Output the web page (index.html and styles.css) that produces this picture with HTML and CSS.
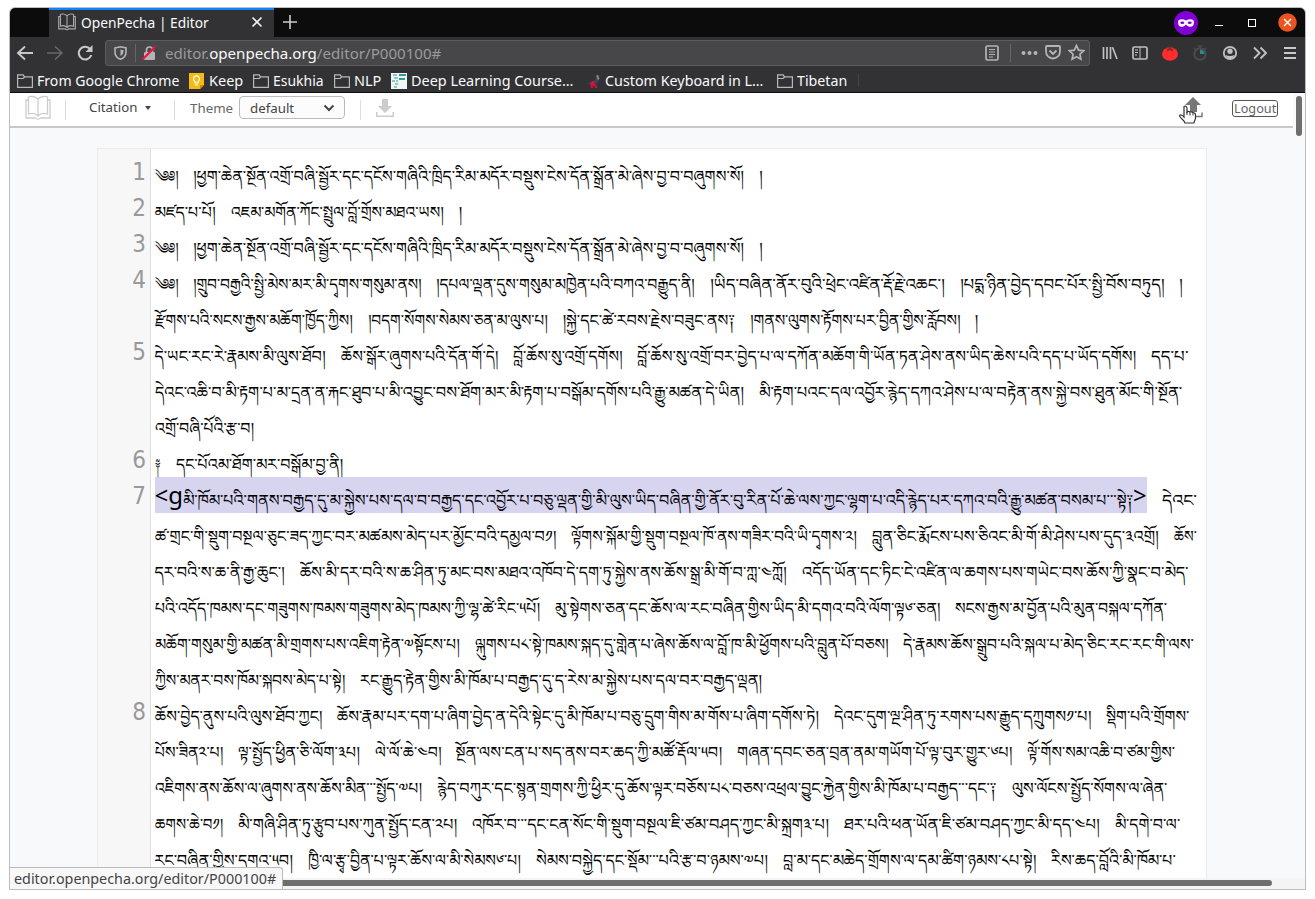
FILE: index.html
```html
<!DOCTYPE html>
<html lang="bo">
<head>
<meta charset="utf-8">
<title>OpenPecha | Editor</title>
<link rel="stylesheet" href="styles.css">
</head>
<body>
<svg class="defs" width="0" height="0"><defs>
<symbol id="folder" viewBox="0 0 16 14"><path d="M.6 13.400V.8h5.600l1.300 2h7.900v10.600zM.6 4.500h5.600l1.300-1.500" fill="none" stroke="#b8b8b8" stroke-width="1.200"/></symbol>
<symbol id="book" viewBox="0 0 26 26"><path d="M13 4C10 1 5 1 3.500 2v17c3-1 7-1 9.500 2c2.500-3 6.500-3 9.500-2V2C21 1 16 1 13 4zv17M3.500 5H1v18h9.500c1 1.500 4 1.500 5 0H25V5h-2.500" fill="none" stroke="currentColor" stroke-width="var(--sw)"/></symbol>
</defs></svg>
<div class="window">
  <header class="tabs">
    <div class="tab">
      <svg class="fav" width="18" height="18"><use href="#book"/></svg>
      <span class="fit" style="width:128px">OpenPecha | Editor</span>
      <svg class="x" width="12" height="12" viewBox="0 0 12 12"><path d="M1.500 1.500l9 9m0-9l-9 9" stroke="#eee" stroke-width="1.700"/></svg>
    </div>
    <svg class="plus" width="16" height="16" viewBox="0 0 16 16"><path d="M8 1v14M1 8h14" stroke="#ccc" stroke-width="1.600"/></svg>
    <svg class="mask" width="24" height="24" viewBox="0 0 24 24"><circle cx="12" cy="12" r="12" fill="#8000d7"/><path d="M4 11c0-3 4-3.500 8-1.500c4-2 8-1.500 8 1.500c0 6-5 6-8 2.500C9 17 4 17 4 11z" fill="#fff"/><ellipse cx="8.300" cy="11.800" rx="2" ry="1.200" fill="#8000d7"/><ellipse cx="15.700" cy="11.800" rx="2" ry="1.200" fill="#8000d7"/></svg>
    <svg class="min" width="8" height="10"><path d="M0 7.500h8" stroke="#fff" stroke-width="1.200"/></svg>
    <svg class="max" width="8" height="8"><rect x=".5" y=".5" width="7" height="7" fill="none" stroke="#fff"/></svg>
    <svg class="close" width="19" height="19" viewBox="0 0 19 19"><circle cx="9.500" cy="9.500" r="9.300" fill="#e95420"/><path d="M6 6l7 7m0-7l-7 7" stroke="#fff" stroke-width="1.400"/></svg>
  </header>
  <nav class="navbar">
    <svg width="18" height="18" viewBox="0 0 18 18"><path d="M17 9H2m7-6.500L2 9l7 6.500" fill="none" stroke="#c8c8ca" stroke-width="1.900"/></svg>
    <svg class="fwd" width="18" height="18" viewBox="0 0 18 18"><path d="M1 9h15M9 2.500L16 9l-7 6.500" fill="none" stroke="#68686b" stroke-width="1.600"/></svg>
    <svg class="reload" width="18" height="18" viewBox="0 0 18 18"><path d="M14.500 5.500A6.400 6.400 0 1 0 15.300 11" fill="none" stroke="#c8c8ca" stroke-width="2.100"/><path d="M16.500 1v7H9.500z" fill="#c8c8ca"/></svg>
    <div class="url">
      <svg width="13" height="14" viewBox="0 0 13 14"><path d="M1 2l5.500-1.200L12 2v4c0 3.500-2 6-5.500 7.200C3 12 1 9.500 1 6z" fill="none" stroke="#b4b4b6" stroke-width="1.600"/><path d="M6.500 3.500v6.500c2-1.200 3-2.500 3-5.800z" fill="#b4b4b6"/></svg>
      <i class="sep"></i>
      <svg width="16" height="16" viewBox="0 0 16 16"><rect x="3" y="7" width="11" height="8" rx="1" fill="#b4b4b6"/><path d="M5.500 7V5a3 3 0 0 1 6 0v2" fill="none" stroke="#b4b4b6" stroke-width="1.700"/><path d="M1.500 14.500L14.500 1.500" stroke="#f0123c" stroke-width="2.200"/></svg>
      <span class="addr fit" style="width:276px">editor.<b>openpecha.org</b>/editor/P000100#</span>
      <svg class="reader" width="14" height="16" viewBox="0 0 14 16"><rect x="1" y="1" width="12" height="14" rx="1.500" fill="none" stroke="#b4b4b6" stroke-width="1.700"/><path d="M4 4.500h6M4 7h6M4 9.500h6M4 12h4" stroke="#b4b4b6"/></svg>
      <i class="sep rsep"></i>
      <svg class="dots" width="17" height="6"><g fill="#b4b4b6"><circle cx="2.500" cy="3" r="2"/><circle cx="8.500" cy="3" r="2"/><circle cx="14.500" cy="3" r="2"/></g></svg>
      <svg class="pocket" width="16" height="15" viewBox="0 0 16 15"><path d="M1 2q0-1 1-1h12q1 0 1 1v4.500a7 7 0 0 1-14 0z" fill="none" stroke="#b4b4b6" stroke-width="1.800"/><path d="M4.500 5.500L8 9l3.500-3.500" fill="none" stroke="#b4b4b6" stroke-width="1.900"/></svg>
      <svg class="star" width="17" height="17" viewBox="0 0 17 17"><path d="M8.500 1.500l2.100 4.700 5 .6-3.700 3.400 1 5-4.400-2.500-4.400 2.500 1-5L1.400 6.800l5-.6z" fill="none" stroke="#b4b4b6" stroke-width="1.700"/></svg>
    </div>
    <div class="ext">
      <svg width="16" height="16" viewBox="0 0 16 16"><path d="M1.500 2v12M5 2v12M8.500 2v12M10.500 2.300L15 14" stroke="#c0c0c2" stroke-width="1.700"/></svg>
      <svg width="16" height="16" viewBox="0 0 16 16"><rect x="1" y="2" width="14" height="12" rx="1.500" fill="none" stroke="#c0c0c2" stroke-width="1.700"/><path d="M8 2v12M3 5h3M3 7.500h3M3 10h2" stroke="#c0c0c2"/></svg>
      <svg width="16" height="16" viewBox="0 0 16 16"><ellipse cx="8" cy="9" rx="8" ry="6.800" fill="#ff2d2d"/><path d="M3 3.500l3.500.2L8 .8l1.500 2.900 3.500-.2-2.500 1.300.5 2-3-1.800-3 1.800.5-2z" fill="#8a2525"/></svg>
      <svg width="16" height="16" viewBox="0 0 16 16"><circle cx="8" cy="9" r="5.700" fill="none" stroke="#4b4b4f" stroke-width="2"/><path d="M6 1h4M8 1v3M2 3l2 2M14 3l-2 2" stroke="#4b4b4f" stroke-width="1.500"/><path d="M8 9V4.500A4.500 4.500 0 0 1 12.500 9z" fill="#2a8c82"/></svg>
      <svg width="16" height="16" viewBox="0 0 16 16"><circle cx="8" cy="8" r="6.200" fill="none" stroke="#c0c0c2" stroke-width="1.800"/><circle cx="8" cy="6.200" r="2.700" fill="#c0c0c2"/><path d="M3.500 10q4.500 2 9 0Q11 14 8 14T3.500 10z" fill="#c0c0c2"/></svg>
      <svg width="16" height="16" viewBox="0 0 16 16"><path d="M2 2.500L7.500 8 2 13.500M8.500 2.500L14 8l-5.500 5.500" fill="none" stroke="#c0c0c2" stroke-width="1.900"/></svg>
      <svg class="menu" width="14" height="16" viewBox="0 0 14 16"><path d="M1 3h12M1 8h12M1 13h12" stroke="#c8c8ca" stroke-width="2"/></svg>
    </div>
  </nav>
  <div class="bookmarks">
    <svg width="16" height="14"><use href="#folder"/></svg><span class="fit" style="width:142px">From Google Chrome</span>
    <svg class="keep" width="15" height="16" viewBox="0 0 15 16"><path d="M0 0h15v12l-4 4H0z" fill="#f5ba15"/><path d="M11 16v-4h4z" fill="#c98d05"/><path d="M6 10V8.500a3 3 0 1 1 3 0V10zM6 12h3" fill="none" stroke="#fff" stroke-width="1.200"/></svg><span class="fit" style="width:34px">Keep</span>
    <svg class="g" width="16" height="14"><use href="#folder"/></svg><span class="fit" style="width:51px">Esukhia</span>
    <svg class="g" width="16" height="14"><use href="#folder"/></svg><span class="fit" style="width:27px">NLP</span>
    <svg class="g" width="16" height="16" viewBox="0 0 16 16"><path d="M0 0h16v16H0z" fill="#eef6f6"/><path d="M2 2h4M3 5h4M1 8h3M5 8h2M4 11h3M3 14h3" stroke="#75b5b3" stroke-width="1.500"/><path d="M8 1h7v2H8zM8 5h6v2H8z" fill="#349a98"/></svg><span class="fit" style="width:162px">Deep Learning Course…</span>
    <svg class="bird" width="16" height="14" viewBox="0 0 16 14"><path d="M1 9l7-1 4-5 2 1-1 5-6 2z" fill="#39435f"/><path d="M11 2l2-1.500 1.500 4-1.500 2z" fill="#8c8073"/><path d="M5 10l2-3h2l1 3 2 2v2h-2v-2H8v2H6z" fill="#d21235"/></svg><span class="fit" style="width:158px">Custom Keyboard in L…</span>
    <svg class="tib" width="16" height="14"><use href="#folder"/></svg><span class="fit" style="width:50px">Tibetan</span>
    <i class="bsep"></i>
  </div>
  <div class="tools">
    <svg class="logo" width="26" height="26"><use href="#book"/></svg>
    <i class="div d1"></i><span class="fit cit" style="width:49px">Citation</span><i class="caret"></i>
    <i class="div d2"></i><span class="fit theme" style="width:43px">Theme</span>
    <div class="select"><span class="fit" style="width:44px">default</span><svg width="12" height="8" viewBox="0 0 12 8"><path d="M1.500 1.500L6 6l4.500-4.500" fill="none" stroke="#444" stroke-width="2"/></svg></div>
    <i class="div d3"></i>
    <svg class="down" width="18" height="19" viewBox="0 0 18 19"><path d="M6 0h6v7h4l-7 7-7-7h4zM0 13h1.500v3.500h15V13H18v5H0z" fill="#ccc"/></svg>
    <svg class="up" width="28" height="28" viewBox="0 0 28 28"><path d="M16 0l8 8h-4v7h-7V8H8z" fill="#777"/><path d="M19 19.500h6v-4" fill="none" stroke="#777" stroke-width="1.500"/><path d="M7 9.500c1.500-1 3 0 3 2v3.500c1-1 2.500-.8 3 .3 1-.8 2.500-.5 3 .7 1.800-.4 2.500.5 2.500 2v3c0 2-1.500 3-1.500 5H8c-1-3-4-4-5.500-7 .5-2 2.500-1 4.500 1z" fill="#fff" stroke="#333" stroke-width="1.200"/><path d="M10 15v3M13 16v2.500M16 16.500v2" stroke="#333"/></svg>
    <a class="logout"><span class="fit" style="width:42px">Logout</span></a>
  </div>
  <main class="view">
    <div class="editor">
      <div class="row"><em>1</em><p class="line"><span class="fit" style="width:23.500px">༄༅།</span><span class="fit" style="width:551px">།ཕྱག་ཆེན་སྔོན་འགྲོ་བཞི་སྦྱོར་དང་དངོས་གཞིའི་ཁྲིད་རིམ་མདོར་བསྡུས་ངེས་དོན་སྒྲོན་མེ་ཞེས་བྱ་བ་བཞུགས་སོ།</span><span class="end">།</span></p></div>
      <div class="row"><em>2</em><p class="line"><span class="fit" style="width:61px">མཛད་པ་པོ།</span><span class="fit" style="width:213px">འཇམ་མགོན་ཀོང་སྤྲུལ་བློ་གྲོས་མཐའ་ཡས།</span><span class="end">།</span></p></div>
      <div class="row"><em>3</em><p class="line"><span class="fit" style="width:23.500px">༄༅།</span><span class="fit" style="width:551px">།ཕྱག་ཆེན་སྔོན་འགྲོ་བཞི་སྦྱོར་དང་དངོས་གཞིའི་ཁྲིད་རིམ་མདོར་བསྡུས་ངེས་དོན་སྒྲོན་མེ་ཞེས་བྱ་བ་བཞུགས་སོ།</span><span class="end">།</span></p></div>
      <div class="row"><em>4</em><p class="line"><span class="fit" style="width:23.500px">༄༅།</span><span class="fit" style="width:228px">།གྲུབ་བརྒྱའི་སྤྱི་མེས་མར་མི་དྭགས་གསུམ་ནས།</span><span class="fit" style="width:259px">།དཔལ་ལྡན་དུས་གསུམ་མཁྱེན་པའི་བཀའ་བརྒྱུད་ནི།</span><span class="fit" style="width:235px">།ཡིད་བཞིན་ནོར་བུའི་ཕྲེང་འཛིན་རྡོ་རྗེ་འཆང་།</span><span class="fit" style="width:204px">།པདྨ་ཉིན་བྱེད་དབང་པོར་སྤྱི་བོས་བཏུད།</span><span class="end">།</span></p></div>
      <div class="row"><em></em><p class="line"><span class="fit" style="width:198px">རྫོགས་པའི་སངས་རྒྱས་མཆོག་ཁྱོད་ཀྱིས།</span><span class="fit" style="width:180px">།བདག་སོགས་སེམས་ཅན་མ་ལུས་པ།</span><span class="fit" style="width:172px">།སྐྱེ་དང་ཚེ་རབས་རྗེས་བཟུང་ནས༑</span><span class="fit" style="width:210px">།གནས་ལུགས་རྟོགས་པར་བྱིན་གྱིས་རློབས།</span><span class="end">།</span></p></div>
      <div class="row"><em>5</em><p class="line"><span class="fit" style="width:171px">དེ་ཡང་རང་རེ་རྣམས་མི་ལུས་ཐོབ།</span><span class="fit" style="width:157px">ཆོས་སྒོར་ཞུགས་པའི་དོན་གོ་དེ།</span><span class="fit" style="width:109px">བློ་ཆོས་སུ་འགྲོ་དགོས།</span><span class="fit" style="width:499px">བློ་ཆོས་སུ་འགྲོ་བར་བྱེད་པ་ལ་དཀོན་མཆོག་གི་ཡོན་ཏན་ཤེས་ནས་ཡིད་ཆེས་པའི་དད་པ་ཡོད་དགོས།</span><span class="fit" style="width:38px">དད་པ་</span></p></div>
      <div class="row"><em></em><p class="line"><span class="fit" style="width:589px">དེའང་འཆི་བ་མི་རྟག་པ་མ་དྲན་ན་རྐང་ཐུབ་པ་མི་འབྱུང་བས་ཐོག་མར་མི་རྟག་པ་བསྒོམ་དགོས་པའི་རྒྱུ་མཚན་དེ་ཡིན།</span><span class="fit" style="width:423px">མི་རྟག་པའང་དལ་འབྱོར་རྙེད་དཀའ་ཤེས་པ་ལ་བརྟེན་ནས་སྐྱེ་བས་ཐུན་མོང་གི་སྔོན་</span></p></div>
      <div class="row"><em></em><p class="line"><span class="fit" style="width:99px">འགྲོ་བཞི་པོའི་རྩ་བ།</span></p></div>
      <div class="row"><em>6</em><p class="line"><span class="fit" style="width:6px">༈</span><span class="fit" style="width:167px">དང་པོའམ་ཐོག་མར་བསྒོམ་བྱ་ནི།</span></p></div>
      <div class="row"><em>7</em><p class="line"><mark>&lt;g<span class="fit" style="width:950px">མི་ཁོམ་པའི་གནས་བརྒྱད་དུ་མ་སྐྱེས་པས་དལ་བ་བརྒྱད་དང་འབྱོར་པ་བཅུ་ལྡན་གྱི་མི་ལུས་ཡིད་བཞིན་གྱི་ནོར་བུ་རིན་པོ་ཆེ་ལས་ཀྱང་ལྷག་པ་འདི་རྙེད་པར་དཀའ་བའི་རྒྱུ་མཚན་བསམ་པ་་་སྟེ༑</span>&gt;</mark><span class="fit" style="width:35px">དེའང་</span></p></div>
      <div class="row"><em></em><p class="line"><span class="fit" style="width:401px">ཚ་གྲང་གི་སྡུག་བསྔལ་ཅུང་ཟད་ཀྱང་བར་མཚམས་མེད་པར་མྱོང་བའི་དམྱལ་བ༡།</span><span class="fit" style="width:286px">ལྟོགས་སྐོམ་གྱི་སྡུག་བསྔལ་ཁོ་ནས་གཟིར་བའི་ཡི་དྭགས་༢།</span><span class="fit" style="width:287px">བླུན་ཅིང་རྨོངས་པས་ཅིའང་མི་གོ་མི་ཤེས་པས་དུད་༣འགྲོ།</span><span class="fit" style="width:23px">ཆོས་</span></p></div>
      <div class="row"><em></em><p class="line"><span class="fit" style="width:130px">དར་བའི་ས་ཆ་ནི་རྒྱ་ཆུང་།</span><span class="fit" style="width:487px">ཆོས་མི་དར་བའི་ས་ཆ་ཤིན་ཏུ་མང་བས་མཐའ་འཁོབ་དེ་དག་ཏུ་སྐྱེས་ནས་ཆོས་སྒྲ་མི་གོ་བ་ཀླ་༤ཀློ།</span><span class="fit" style="width:386px">འདོད་ཡོན་དང་ཏིང་ངེ་འཛིན་ལ་ཆགས་པས་གཡེང་བས་ཆོས་ཀྱི་སྣང་བ་མེད་</span></p></div>
      <div class="row"><em></em><p class="line"><span class="fit" style="width:385px">པའི་འདོད་ཁམས་དང་གཟུགས་ཁམས་གཟུགས་མེད་ཁམས་ཀྱི་ལྷ་ཚེ་རིང་༥པོ།</span><span class="fit" style="width:385px">མུ་སྟེགས་ཅན་དང་ཆོས་ལ་རང་བཞིན་གྱིས་ཡིད་མི་དགའ་བའི་ལོག་ལྟ༦་ཅན།</span><span class="fit" style="width:212px">སངས་རྒྱས་མ་བྱོན་པའི་མུན་བསྐལ་དཀོན་</span></p></div>
      <div class="row"><em></em><p class="line"><span class="fit" style="width:305px">མཆོག་གསུམ་གྱི་མཚན་མི་གྲགས་པས་འཇིག་རྟེན་༧སྟོངས་པ།</span><span class="fit" style="width:413px">ལྐུགས་པ༨་སྟེ་ཁམས་སྐད་དུ་གླེན་པ་ཞེས་ཆོས་ལ་བློ་ཁ་མི་ཕྱོགས་པའི་བླུན་པོ་བཅས།</span><span class="fit" style="width:291px">དེ་རྣམས་ཆོས་སྒྲུབ་པའི་སྐལ་པ་མེད་ཅིང་རང་རང་གི་ལས་</span></p></div>
      <div class="row"><em></em><p class="line"><span class="fit" style="width:190px">ཀྱིས་མནར་བས་ཁོམ་སྐབས་མེད་པ་སྟེ།</span><span class="fit" style="width:402px">རང་རྒྱུད་རྟེན་གྱིས་མི་ཁོམ་པ་བརྒྱད་དུ་ད་རེས་མ་སྐྱེས་པས་དལ་བར་བརྒྱད་ལྡན།</span></p></div>
      <div class="row"><em>8</em><p class="line"><span class="fit" style="width:167px">ཆོས་བྱེད་ནུས་པའི་ལུས་ཐོབ་ཀྱང།</span><span class="fit" style="width:482px">ཆོས་རྣམ་པར་དག་པ་ཞིག་བྱེད་ན་དེའི་སྟེང་དུ་མི་ཁོམ་པ་བཅུ་དྲུག་གིས་མ་གོས་པ་ཞིག་དགོས་ཏེ།</span><span class="fit" style="width:257px">དེའང་དུག་ལྔ་ཤིན་ཏུ་རགས་པས་རྒྱུད་དཀྲུགས༡་པ།</span><span class="fit" style="width:83px">སྡིག་པའི་གྲོགས་</span></p></div>
      <div class="row"><em></em><p class="line"><span class="fit" style="width:68px">པོས་ཟིན༢་པ།</span><span class="fit" style="width:122px">ལྟ་སྤྱོད་ཕྱིན་ཅི་ལོག་༣པ།</span><span class="fit" style="width:66px">ལེ་ལོ་ཆེ་༤བ།</span><span class="fit" style="width:266px">སྔོན་ལས་ངན་པ་སད་ནས་བར་ཆད་ཀྱི་མཚོ་རྡོལ་༥བ།</span><span class="fit" style="width:275px">གཞན་དབང་ཅན་བྲན་ནམ་གཡོག་པོ་ལྟ་བུར་གྱུར་༦པ།</span><span class="fit" style="width:148px">ལྟོ་གོས་སམ་འཆི་བ་ཙམ་གྱིས་</span></p></div>
      <div class="row"><em></em><p class="line"><span class="fit" style="width:267px">འཇིགས་ནས་ཆོས་ལ་ཞུགས་ནས་ཆོས་མིན་་་སྤྱོད་༧པ།</span><span class="fit" style="width:560px">རྙེད་བཀུར་དང་སྙན་གྲགས་ཀྱི་ཕྱིར་དུ་ཆོས་ལྟར་བཅོས་པ༨་བཅས་འཕྲལ་བྱུང་རྐྱེན་གྱིས་མི་ཁོམ་པ་བརྒྱད་་་དང་༑</span><span class="fit" style="width:155px">ལུས་ལོངས་སྤྱོད་སོགས་ལ་ཞེན་</span></p></div>
      <div class="row"><em></em><p class="line"><span class="fit" style="width:68px">ཆགས་ཆེ་བ༡།</span><span class="fit" style="width:219px">མི་གཞི་ཤིན་ཏུ་རྩུབ་པས་ཀུན་སྤྱོད་ངན་༢པ།</span><span class="fit" style="width:357px">འཁོར་བ་་་དང་ངན་སོང་གི་སྡུག་བསྔལ་ཇི་ཙམ་བཤད་ཀྱང་མི་སྐྲག༣་པ།</span><span class="fit" style="width:256px">ཐར་པའི་ཕན་ཡོན་ཇི་ཙམ་བཤད་ཀྱང་མི་དད་༤པ།</span><span class="fit" style="width:65px">མི་དགེ་བ་ལ་</span></p></div>
      <div class="row"><em></em><p class="line"><span class="fit" style="width:138px">རང་བཞིན་གྱིས་དགའ་༥བ།</span><span class="fit" style="width:213px">ཁྱི་ལ་རྩྭ་བྱིན་པ་ལྟར་ཆོས་ལ་མི་སེམས༦་པ།</span><span class="fit" style="width:232px">སེམས་བསྐྱེད་དང་སྡོམ་་་པའི་རྩ་བ་ཉམས་༧པ།</span><span class="fit" style="width:253px">བླ་མ་དང་མཆེད་གྲོགས་ལ་དམ་ཚིག་ཉམས་༨པ་སྟེ།</span><span class="fit" style="width:125px">རིས་ཆད་བློའི་མི་ཁོམ་པ་</span></p></div>
    </div>
  </main>
  <footer class="hscroll"><i></i></footer>
  <i class="vbar"></i>
  <div class="status"><span class="fit" style="width:262px">editor.openpecha.org/editor/P000100#</span></div>
</div>
<script src="fit.js"></script>
</body>
</html>
```
FILE: styles.css
```css
* { box-sizing: border-box; }
body { margin: 0; background: #fff; font-family: "Noto Sans", "Open Sans", sans-serif; }
.defs { position: absolute; }
svg, i { flex: none; display: block; }
.window { position: relative; width: 1297px; height: 883px; margin: 7px 0 0 9px; border: 1px solid #bdbdbd; border-radius: 6px 6px 0 0; overflow: hidden; display: flex; flex-direction: column; background: #f8f9fb; }
.fit { display: block; flex: none; white-space: nowrap; }
.fit > span { display: inline-block; transform-origin: 0 50%; white-space: nowrap; }
.tabs { height: 29px; flex: none; display: flex; align-items: center; background: #0c0c0d; }
.tab { width: 225px; height: 29px; margin-left: 39px; padding: 0 11px 3px 9px; display: flex; align-items: center; background: #323234; border-top: 2px solid #0a84ff; color: #f9f9fa; font-size: 14.5px; }
.fav { color: #a8a8a8; margin-right: 5px; --sw: 1.6; }
.x { margin-left: auto; }
.plus { margin: 0 0 1px 8px; }
.mask { margin-left: auto; }
.min { margin-left: 17px; }
.max { margin-left: 25px; }
.close { margin: 0 8px 0 22px; }
.navbar { height: 33px; flex: none; display: flex; align-items: center; background: #323234; padding: 0 0 2px 6px; }
.fwd { margin-left: 12px; }
.reload { margin-left: 12px; }
.url { width: 985px; height: 26px; margin-left: 11px; display: flex; align-items: center; padding: 0 4px 0 8px; background: #474749; border: 1px solid #5c5c60; border-radius: 3px; }
.sep { width: 1px; height: 18px; margin: 0 5px 0 8px; background: #66666a; }
.addr { margin-left: 8px; color: #9a9a9c; font-size: 14.5px; }
.addr b { font-weight: 400; color: #f9f9fa; }
.reader { margin-left: auto; }
.rsep { margin: 0 10px 0 11px; }
.pocket { margin: 0 7px; }
.ext { display: flex; align-items: center; gap: 14px; margin-left: 12px; }
.menu { margin-left: 1px; }
.bookmarks { height: 23px; flex: none; display: flex; align-items: center; padding: 0 0 1px 7px; background: #323234; border-bottom: 1px solid #0c0c0d; color: #f9f9fa; font-size: 14.5px; line-height: 20px; }
.bookmarks > .fit { margin: 0 0 2px 4px; }
.keep { margin-left: 10px; }
.keep + .fit { margin-left: 5px !important; }
.g { margin-left: 10px; }
.bird { margin-left: 12px; }
.tib { margin-left: 14px; }
.bsep { width: 1px; height: 13px; margin-left: 11px; background: #444448; }
.tools { width: 1283px; height: 35px; flex: none; display: flex; align-items: center; padding: 0 15px 4px; background: #fff; border-bottom: 2px solid #c8c8c8; color: #666; font-size: 13px; }
.logo { color: #ccc; --sw: 1.3; }
.div { width: 1px; height: 20px; background: #ddd; margin-top: 5px; }
.d1 { margin-left: 14px; }
.cit { margin: 0 0 2px 23px; color: #444; }
.caret { margin-left: 7px; border: 3px solid transparent; border-top: 4px solid #444; border-bottom: 0; }
.d2 { margin-left: 23px; }
.theme { margin-left: 15px; }
.select { width: 106px; height: 23px; margin-left: 6px; padding: 0 9px 0 10px; display: flex; align-items: center; justify-content: space-between; border: 1px solid #bbb; border-radius: 4px; color: #444; background: #fcfcfc; }
.d3 { margin-left: 15px; }
.down { margin: 2px 0 0 15px; }
.up { margin: 7px 0 0 auto; }
.logout { width: 46px; height: 17px; margin: 2px 0 0 27px; padding-left: 1px; border: 1px solid #555; border-radius: 3px; line-height: 15px; }
.view { flex: 1; min-height: 0; overflow: hidden; display: flex; padding-left: 87px; }
.editor { width: 1110px; height: 760px; margin-top: 20px; padding-top: 4px; border: 1px solid #ececec; background: linear-gradient(90deg, #f7f7f7 52px, #ddd 52px, #ddd 53px, #fff 53px); }
.row { height: 36px; display: flex; font-size: 24px; line-height: 36px; }
.row em { width: 48px; padding-top: 1px; text-align: right; font-family: "DejaVu Sans Condensed", "DejaVu Sans", sans-serif; font-stretch: condensed; font-style: normal; color: #999; }
.line { margin: 0 0 0 8.5px; display: flex; gap: 15px; color: #000; white-space: nowrap; }
.line .fit, .line .end { font-family: "Noto Serif Tibetan", "Noto Sans Tibetan", "Jomolhari", "DejaVu Sans", sans-serif; font-size: 16px; height: 36px; padding-top: 9px; line-height: 40px; }
mark { display: flex; width: 992px; background: #d7d4f0; color: #000; height: 36px; }
.vbar { position: absolute; right: 3px; top: 88px; width: 6px; height: 40px; border-radius: 3px; background: #6e6e6e; }
.hscroll { height: 11px; flex: none; padding: 2px 33px 0 0; background: #f4f4f4; }
.hscroll i { height: 6px; border-radius: 3px; background: #6e6e6e; }
.status { position: absolute; left: 0; bottom: 0; width: 273px; height: 22px; padding-left: 4px; background: #f8f8f8; border: 1px solid #bbb; border-left: 0; border-bottom: 0; border-radius: 0 3px 0 0; color: #444; font-size: 14px; line-height: 22px; }
```
FILE: fit.js
```javascript
// Scale each text run horizontally so that it fills its own column.
document.querySelectorAll('.fit').forEach(function (box) {
  var run = document.createElement('span');
  while (box.firstChild) run.appendChild(box.firstChild);
  box.appendChild(run);
  var natural = run.offsetWidth;
  if (natural) run.style.transform = 'scaleX(' + parseFloat(box.style.width) / natural + ')';
});
```
